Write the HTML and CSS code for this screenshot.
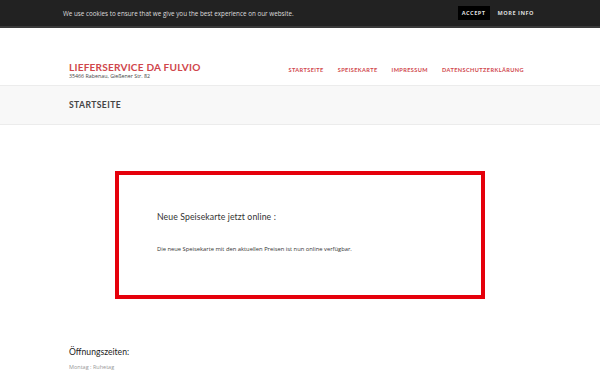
FILE: index.html
```html
<!DOCTYPE html>
<html lang="de">
<head>
<meta charset="utf-8">
<title>Lieferservice da Fulvio</title>
<link rel="stylesheet" href="styles.css">
</head>
<body>
<div class="cookie">
  <div class="cookie-inner">
    <span class="cookie-text">We use cookies to ensure that we give you the best experience on our website.</span>
    <span class="cookie-actions"><span class="accept">ACCEPT</span><span class="more">MORE INFO</span></span>
  </div>
</div>
<header class="header">
  <div class="wrap header-inner">
    <div class="brand">
      <div class="title">LIEFERSERVICE DA FULVIO</div>
      <div class="addr">35466 Rabenau, Gießener Str. 82</div>
    </div>
    <nav class="nav">
      <a>STARTSEITE</a><a>SPEISEKARTE</a><a>IMPRESSUM</a><a>DATENSCHUTZERKLÄRUNG</a>
    </nav>
  </div>
</header>
<div class="band">
  <div class="wrap"><h1>STARTSEITE</h1></div>
</div>
<main class="main">
  <div class="notice">
    <h2>Neue Speisekarte jetzt online :</h2>
    <p>Die neue Speisekarte mit den aktuellen Preisen ist nun online verfügbar.</p>
  </div>
  <div class="wrap hours">
    <h3>Öffnungszeiten:</h3>
    <p>Montag : Ruhetag</p>
  </div>
</main>
</body>
</html>
```
FILE: styles.css
```css
* { box-sizing: border-box; margin: 0; padding: 0; }
html, body { height: 375px; overflow: hidden; }
body { font-family: "Open Sans", "DejaVu Sans", sans-serif; background: #fff; color: #444; width: 600px; }
.wrap { width: 462px; margin: 0 auto; }
.cookie { background: #222; height: 28px; border-bottom: 2px solid #3a3a3a; }
.cookie-inner { display: flex; align-items: center; justify-content: space-between; height: 26px; padding: 0 66px 0 63px; }
.cookie-text { color: #ddd; font-size: 6.3px; }
.cookie-actions { display: flex; align-items: center; gap: 8px; font-size: 5.6px; font-weight: 700; letter-spacing: 0.5px; color: #ddd; }
.accept { background: #000; padding: 3px 4px; }
.header { height: 58px; border-bottom: 1px solid #ececec; }
.header-inner { display: flex; justify-content: space-between; align-items: flex-end; padding-top: 33px; }
.title { font-family: "Lato", sans-serif; color: #d0464c; font-size: 10.1px; font-weight: 700; letter-spacing: 0.2px; line-height: 12px; }
.addr { font-size: 5.3px; color: #444; line-height: 7px; }
.nav { display: flex; gap: 14px; padding-bottom: 7px; padding-right: 7px; }
.nav a { font-family: "Lato", sans-serif; font-size: 5.6px; font-weight: 700; letter-spacing: 0.4px; color: #d0464c; }
.band { background: #f8f8f8; height: 39px; border-bottom: 1px solid #ececec; display: flex; align-items: center; }
.band h1 { font-family: "Lato", sans-serif; font-size: 8.6px; font-weight: 700; letter-spacing: 0.4px; color: #444; }
.main { padding-top: 46px; }
.notice { width: 370px; height: 128px; margin: 0 auto; border: 4px solid #e5000b; padding: 36px 0 0 38px; }
.notice h2 { font-family: "Lato", sans-serif; font-weight: 400; font-size: 8.7px; color: #333; letter-spacing: 0.1px; }
.notice p { font-size: 5.8px; color: #333; margin-top: 23px; }
.hours { padding-top: 48px; }
.hours h3 { font-family: "Lato", sans-serif; font-weight: 400; font-size: 8.6px; color: #222; }
.hours p { font-size: 5.5px; color: #999; margin-top: 6px; }
```
